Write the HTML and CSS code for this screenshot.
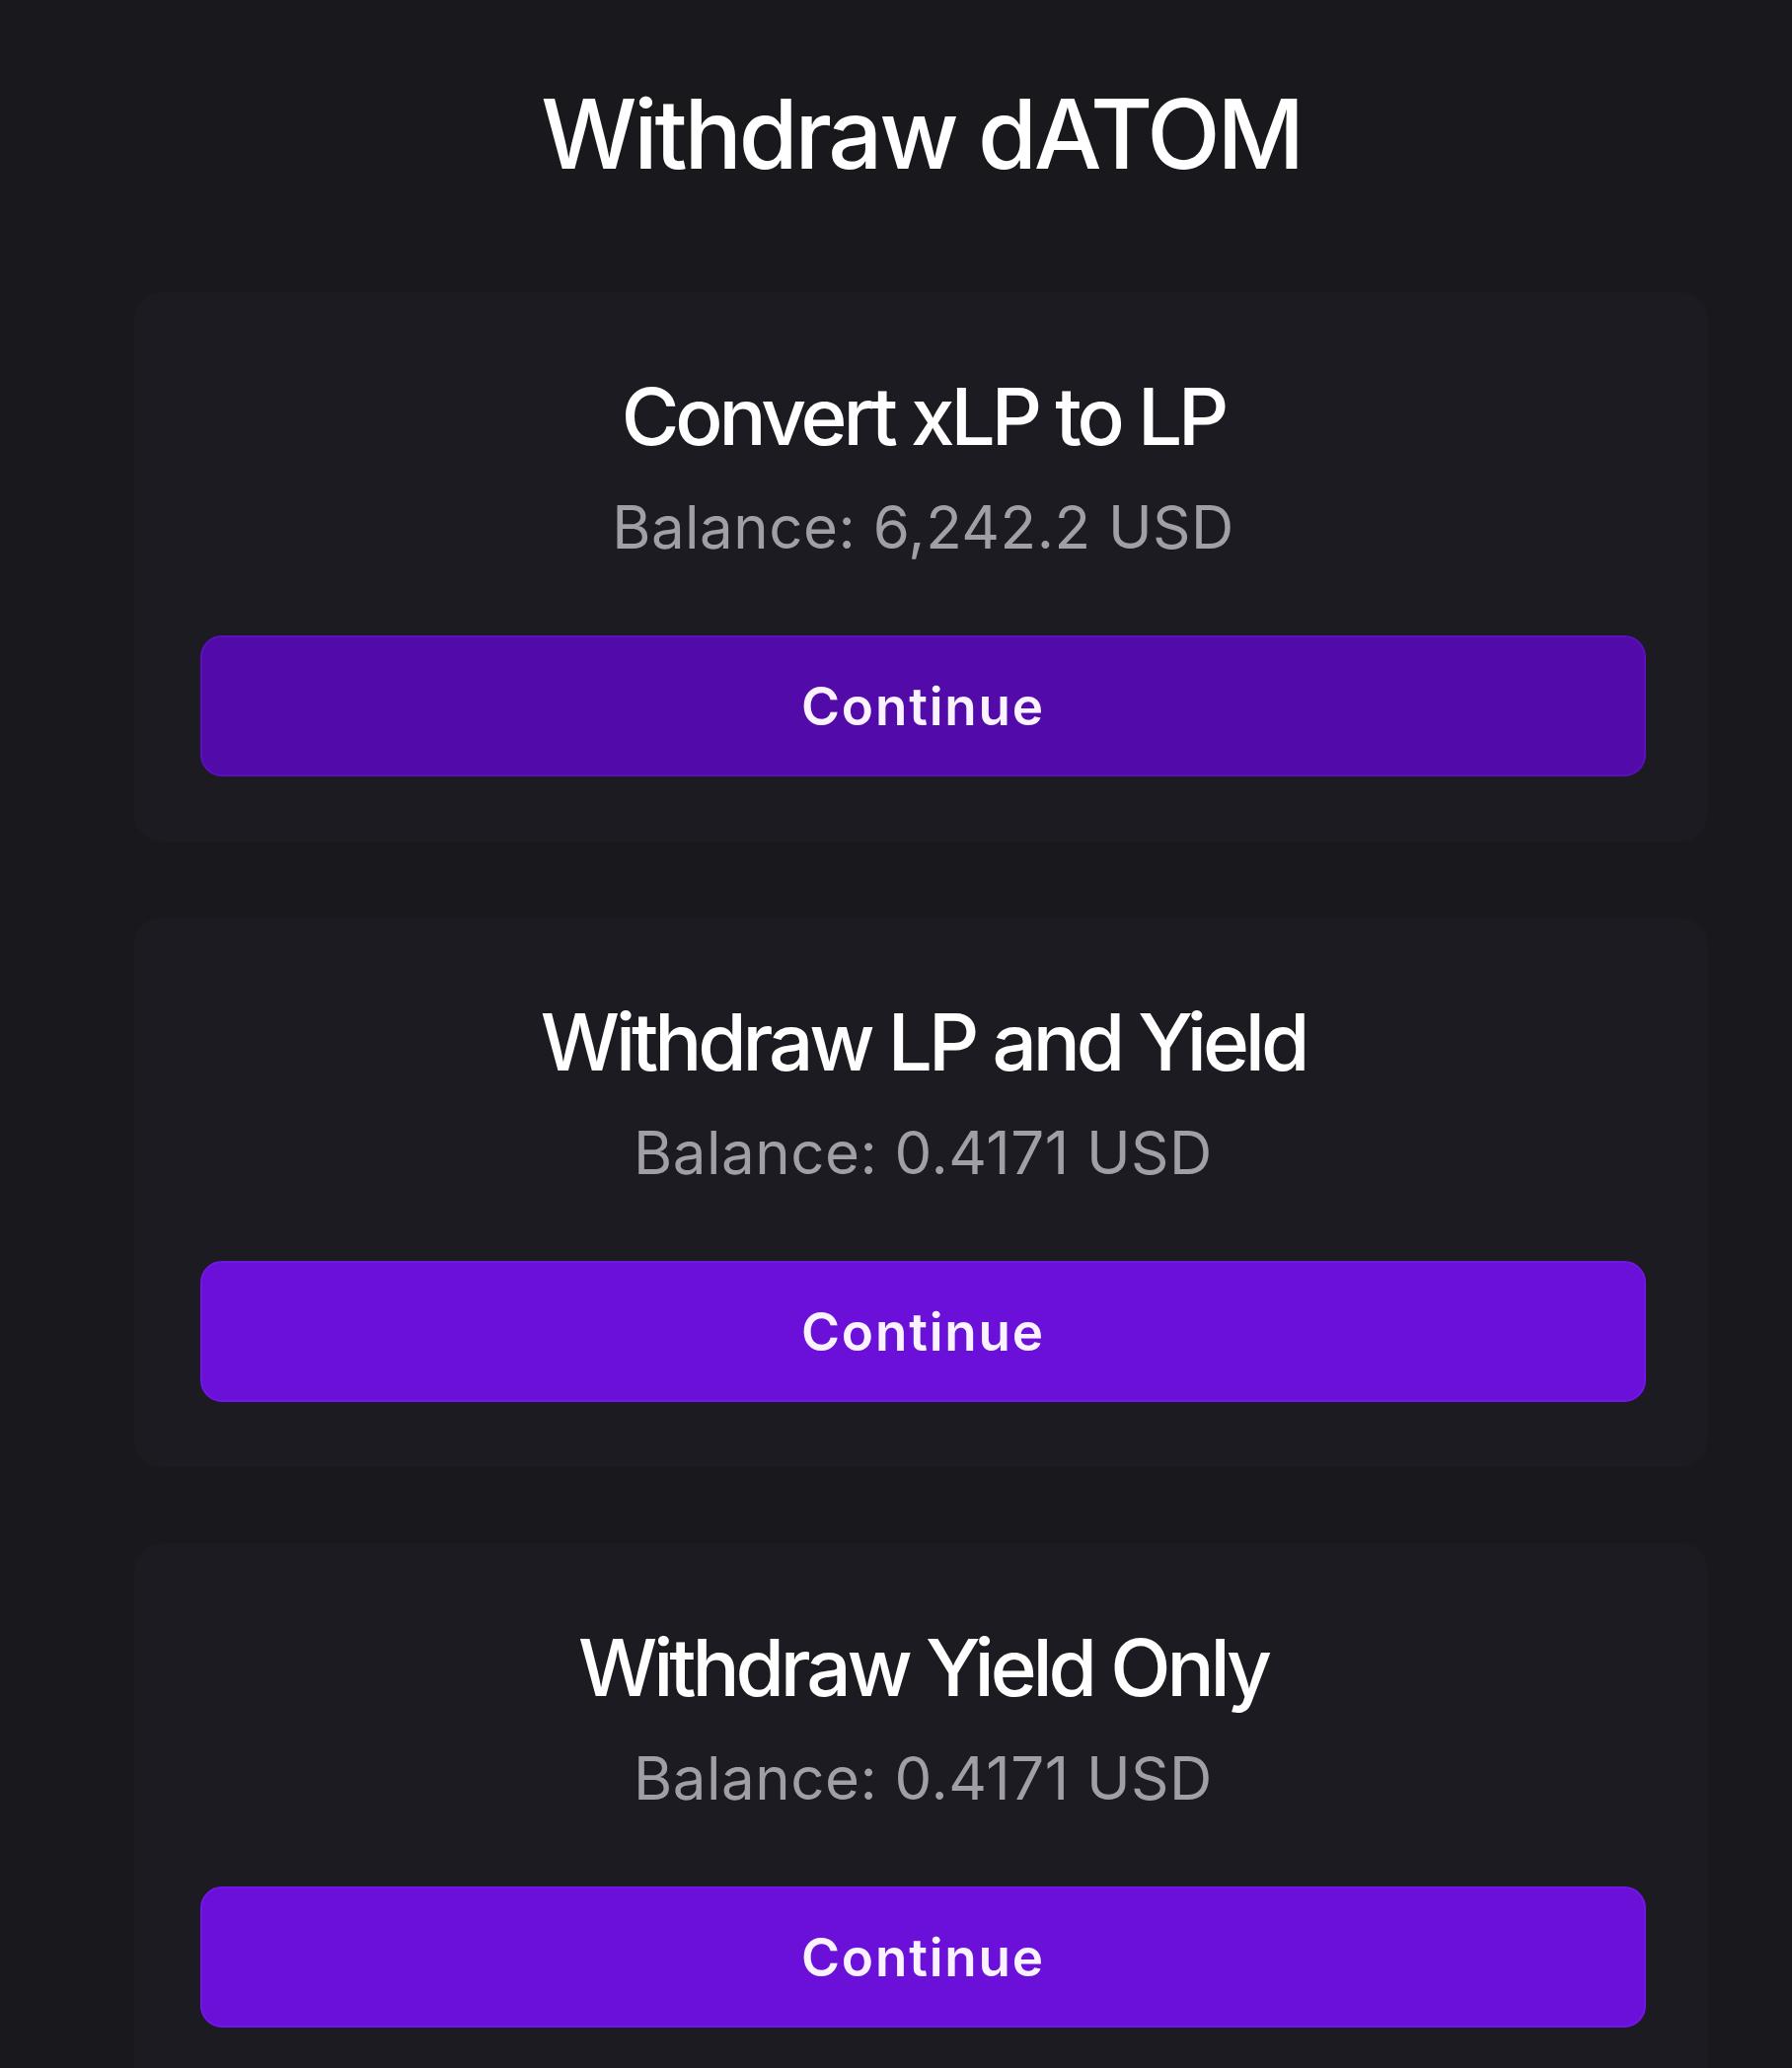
FILE: index.html
```html
<!DOCTYPE html>
<html>
<head>
<meta charset="utf-8">
<link rel="stylesheet" href="styles.css">
</head>
<body>
<main class="page">
  <h1 class="page-title">Withdraw dATOM</h1>
  <section class="card">
    <h2 class="card-title">Convert xLP to LP</h2>
    <p class="balance">Balance: 6,242.2 USD</p>
    <button class="btn btn-dim">Continue</button>
  </section>
  <section class="card">
    <h2 class="card-title">Withdraw LP and Yield</h2>
    <p class="balance">Balance: 0.4171 USD</p>
    <button class="btn">Continue</button>
  </section>
  <section class="card">
    <h2 class="card-title">Withdraw Yield Only</h2>
    <p class="balance">Balance: 0.4171 USD</p>
    <button class="btn">Continue</button>
  </section>
</main>
</body>
</html>
```
FILE: styles.css
```css
html, body {
  margin: 0;
  padding: 0;
  background: #19181d;
}
body {
  font-family: Inter, "Noto Sans", "Liberation Sans", sans-serif;
  color: #ffffff;
  overflow: hidden;
  height: 2096px;
}
.page {
  padding: 76px 86px 0 137px;
  display: flex;
  flex-direction: column;
  align-items: stretch;
  gap: 79px;
}
.page-title {
  margin: 0 0 22px 0;
  font-size: 97px;
  line-height: 120px;
  font-weight: 500;
  text-align: center;
  letter-spacing: -3.2px;
}
.card {
  background: #1c1b21;
  border-radius: 26px;
  box-shadow: 0 0 0 1px rgba(255,255,255,0.015);
  padding: 75px 62px 65px 66px;
  display: flex;
  flex-direction: column;
  align-items: stretch;
}
.card-title {
  margin: 0;
  font-size: 80px;
  line-height: 100px;
  font-weight: 500;
  text-align: center;
  letter-spacing: -4.1px;
}
.balance {
  margin: 26px 0 0 0;
  font-size: 60px;
  line-height: 72px;
  font-weight: 400;
  text-align: center;
  color: #a09fa6;
  letter-spacing: 0.5px;
}
.btn {
  margin-top: 74px;
  height: 143px;
  border: 2px solid #7316ea;
  border-radius: 22px;
  background: #6a10d8;
  color: #faf3ff;
  font-family: inherit;
  font-size: 53px;
  font-weight: 600;
  letter-spacing: 1.8px;
  padding: 0;
}
.btn-dim {
  background: #520ba8;
  border-color: #5c10c0;
}
```
